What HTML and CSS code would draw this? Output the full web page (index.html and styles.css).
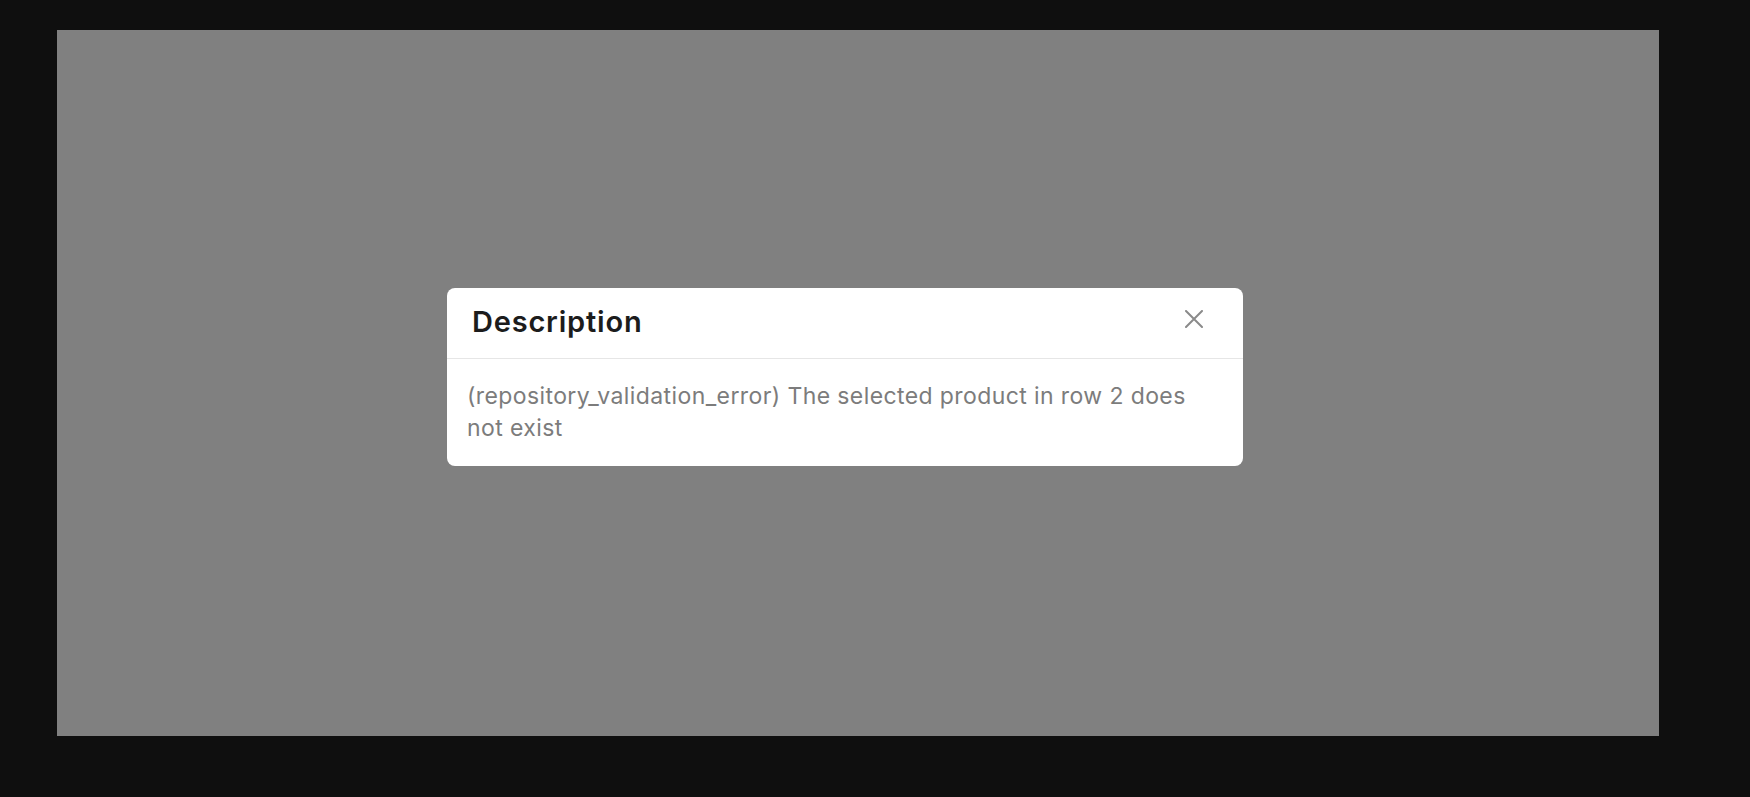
FILE: index.html
```html
<!DOCTYPE html>
<html lang="en">
<head>
<meta charset="utf-8">
<title>Description</title>
<link rel="stylesheet" href="styles.css">
</head>
<body>
<div class="stage">
  <div class="modal" role="dialog" aria-labelledby="modal-title">
    <div class="modal-header">
      <h2 class="modal-title" id="modal-title">Description</h2>
      <button class="modal-close" aria-label="Close">
        <svg width="18" height="18" viewBox="0 0 18 18" aria-hidden="true">
          <path d="M1 1 L17 17 M17 1 L1 17" stroke="#8a8a8a" stroke-width="2" stroke-linecap="round" fill="none"/>
        </svg>
      </button>
    </div>
    <div class="modal-body">
      <p class="modal-text">(repository_validation_error) The selected product in row 2 does not exist</p>
    </div>
  </div>
</div>
</body>
</html>
```

FILE: styles.css
```css
* { box-sizing: border-box; }
html, body { margin: 0; padding: 0; }
body {
  background: #0f0f0f;
  width: 1750px;
  height: 797px;
  padding: 30px 91px 61px 57px;
  font-family: Inter, "Noto Sans", "Liberation Sans", sans-serif;
}
.stage {
  background: #808080;
  width: 1602px;
  height: 706px;
  padding: 258px 0 0 390px;
  display: flex;
  align-items: flex-start;
}
.modal {
  width: 796px;
  background: #ffffff;
  border-radius: 8px;
  display: flex;
  flex-direction: column;
  overflow: hidden;
}
.modal-header {
  height: 71px;
  border-bottom: 1px solid #e6e6e6;
  display: flex;
  align-items: center;
  justify-content: space-between;
  padding: 0 40px 2px 25px;
}
.modal-title {
  margin: 0;
  font-size: 29px;
  font-weight: 600;
  color: #1c1c1c;
  letter-spacing: 0.8px;
  line-height: 36px;
}
.modal-close {
  border: 0;
  background: none;
  padding: 0;
  margin: 0 0 6px 0;
  width: 18px;
  height: 18px;
  display: flex;
  cursor: pointer;
}
.modal-body {
  padding: 21px 32px 22px 20px;
}
.modal-text {
  margin: 0;
  font-size: 23px;
  line-height: 32px;
  letter-spacing: 0.4px;
  color: #7c7c7c;
}
```
